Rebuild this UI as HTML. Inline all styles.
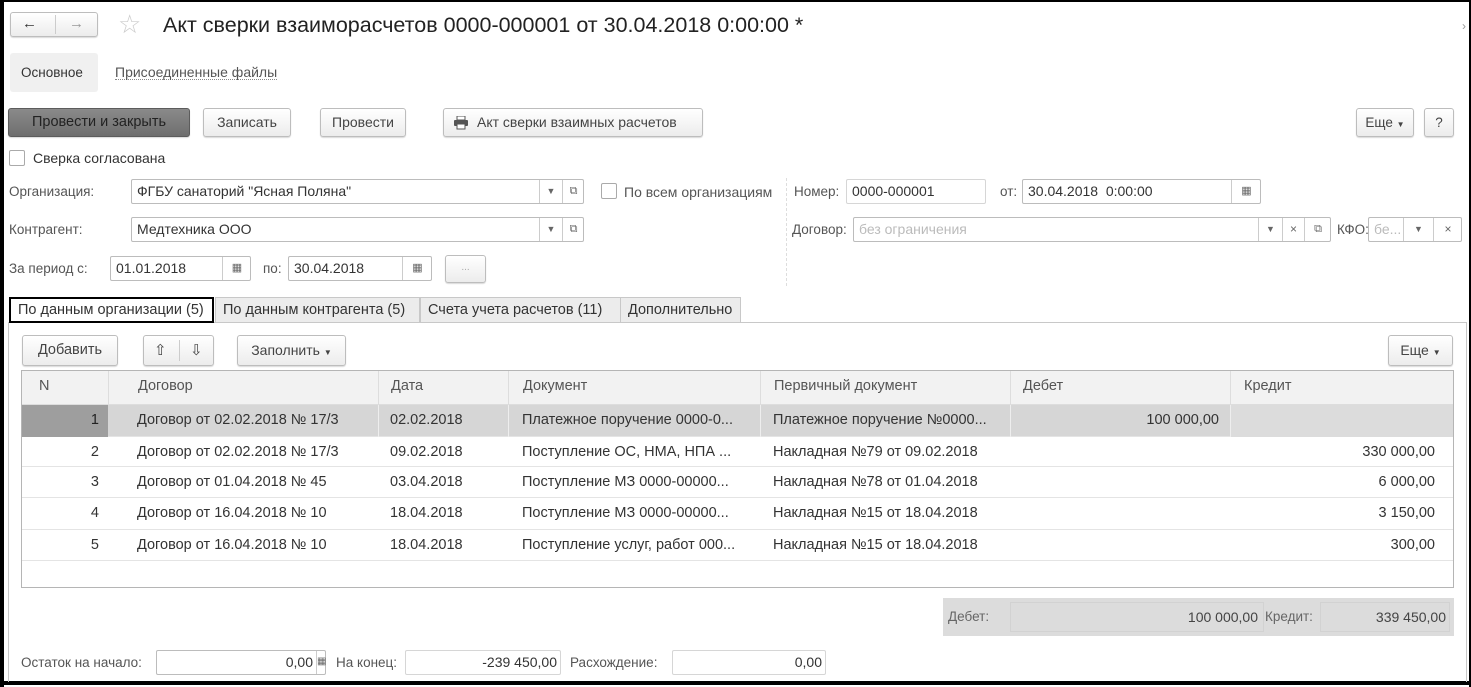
<!DOCTYPE html>
<html><head><meta charset="utf-8"><style>
*{box-sizing:border-box}
body{margin:0;width:1471px;height:687px;background:#fff;font-family:"Liberation Sans",Arial,sans-serif;font-size:13.5px;color:#333;position:relative;overflow:hidden}
.a{position:absolute}
.t{position:absolute;white-space:nowrap;line-height:16px}
.btn{position:absolute;border:1px solid #bdbdbd;border-radius:3px;background:linear-gradient(#fff,#ececec);box-shadow:0 1px 1px rgba(0,0,0,.15);text-align:center;color:#444;white-space:nowrap}
.inp{position:absolute;border:1px solid #bcbcbc;border-radius:2px;background:#fff;height:25px;line-height:23px;padding-left:5px;white-space:nowrap;color:#333;overflow:hidden;font-size:14px}
.sq{position:absolute;border-left:1px solid #ccc;top:0;bottom:0;text-align:center;font-size:9px;color:#666}
.cb{position:absolute;width:16px;height:16px;border:1px solid #aaa;border-radius:2px;background:#fff}
.lbl{color:#555}
.tab{position:absolute;top:297px;height:26px;background:#ececec;border:1px solid #c8c8c8;line-height:24px;padding:0 7px;color:#333;font-size:14.5px;white-space:nowrap}
.row{position:absolute;left:22px;width:1431px;border-bottom:1px solid #e4e4e4;font-size:14.5px}
.row div{position:absolute;top:0;white-space:nowrap}
</style></head><body>
<div class="a" style="left:0;top:0;width:1471px;height:2px;background:#000"></div>
<div class="a" style="left:0;top:0;width:4px;height:687px;background:#000"></div>
<div class="a" style="left:1469px;top:0;width:2px;height:687px;background:#000"></div>
<div class="a" style="left:0;top:681px;width:1471px;height:4px;background:#000"></div>

<div class="btn" style="left:10px;top:12px;width:88px;height:25px;line-height:22px;font-size:15px"><span style="position:absolute;left:11px;color:#333">&#8592;</span><span style="position:absolute;left:44px;top:2px;bottom:2px;border-left:1px solid #ccc"></span><span style="position:absolute;left:58px;color:#999">&#8594;</span></div>
<div class="t" style="left:118px;top:10px;font-size:26px;line-height:28px;color:#ccc">&#9734;</div>
<div class="t" style="left:163px;top:13px;font-size:21.5px;line-height:24px;color:#222">Акт сверки взаиморасчетов 0000-000001 от 30.04.2018 0:00:00 *</div>
<div class="t" style="left:1462px;top:18px;color:#999;font-size:12px">&#8250;</div>

<div class="a" style="left:10px;top:53px;width:88px;height:39px;background:#f0f0f0;border-radius:3px"></div>
<div class="t" style="left:21px;top:65px;color:#333">Основное</div>
<div class="t" style="left:115px;top:65px;color:#555;border-bottom:1px dotted #888;line-height:14px;font-size:14px">Присоединенные файлы</div>

<div class="btn" style="left:8px;top:108px;width:182px;height:29px;line-height:27px;background:linear-gradient(#8a8a8a,#6e6e6e);border-color:#5c5c5c;color:#222;font-size:14.5px">Провести и закрыть</div>
<div class="btn" style="left:203px;top:108px;width:88px;height:29px;line-height:27px;font-size:14px">Записать</div>
<div class="btn" style="left:320px;top:108px;width:86px;height:29px;line-height:27px;font-size:14px">Провести</div>
<div class="btn" style="left:443px;top:108px;width:260px;height:29px;line-height:27px;text-align:left;padding-left:33px;font-size:14px">
<svg class="a" style="left:9px;top:7px" width="16" height="14" viewBox="0 0 16 14"><rect x="4" y="0" width="8" height="4" fill="#fff" stroke="#555"/><rect x="1" y="4" width="14" height="6" rx="1" fill="#555"/><rect x="4" y="8" width="8" height="5" fill="#fff" stroke="#555"/></svg>Акт сверки взаимных расчетов</div>
<div class="btn" style="left:1356px;top:108px;width:58px;height:29px;line-height:27px">Еще <span style="font-size:8px">&#9660;</span></div>
<div class="btn" style="left:1424px;top:108px;width:30px;height:29px;line-height:27px">?</div>

<div class="cb" style="left:9px;top:150px"></div>
<div class="t" style="left:33px;top:150px;font-size:14px">Сверка согласована</div>

<div class="t lbl" style="left:9px;top:184px">Организация:</div>
<div class="inp" style="left:131px;top:179px;width:453px">ФГБУ санаторий "Ясная Поляна"<div class="sq" style="left:407px;width:23px">&#9660;</div><div class="sq" style="left:430px;width:22px;font-size:11px">&#10697;</div></div>
<div class="cb" style="left:601px;top:183px"></div>
<div class="t lbl" style="left:624px;top:184px;font-size:14px">По всем организациям</div>
<div class="a" style="left:786px;top:178px;height:108px;border-left:1px dashed #ddd"></div>
<div class="t lbl" style="left:794px;top:184px">Номер:</div>
<div class="inp" style="left:846px;top:179px;width:140px;border-color:#d6d6d6">0000-000001</div>
<div class="t lbl" style="left:1000px;top:184px">от:</div>
<div class="inp" style="left:1022px;top:179px;width:239px">30.04.2018 &nbsp;0:00:00<div class="sq" style="left:208px;width:30px;font-size:11px">&#9638;</div></div>

<div class="t lbl" style="left:9px;top:222px">Контрагент:</div>
<div class="inp" style="left:131px;top:217px;width:453px">Медтехника ООО<div class="sq" style="left:407px;width:23px">&#9660;</div><div class="sq" style="left:430px;width:22px;font-size:11px">&#10697;</div></div>
<div class="t lbl" style="left:792px;top:222px">Договор:</div>
<div class="inp" style="left:853px;top:217px;width:478px;color:#bbb">без ограничения<div class="sq" style="left:404px;width:24px;color:#666">&#9660;</div><div class="sq" style="left:428px;width:22px;font-size:12px;color:#666">&#215;</div><div class="sq" style="left:450px;width:27px;font-size:11px;color:#666">&#10697;</div></div>
<div class="t lbl" style="left:1337px;top:222px">КФО:</div>
<div class="inp" style="left:1368px;top:217px;width:94px;color:#bbb">бе...<div class="sq" style="left:34px;width:30px;color:#666">&#9660;</div><div class="sq" style="left:64px;width:29px;font-size:12px;color:#666">&#215;</div></div>

<div class="t lbl" style="left:9px;top:261px">За период с:</div>
<div class="inp" style="left:110px;top:256px;width:141px">01.01.2018<div class="sq" style="left:111px;width:29px;font-size:11px">&#9638;</div></div>
<div class="t lbl" style="left:263px;top:261px">по:</div>
<div class="inp" style="left:288px;top:256px;width:144px">30.04.2018<div class="sq" style="left:113px;width:30px;font-size:11px">&#9638;</div></div>
<div class="btn" style="left:445px;top:255px;width:41px;height:28px;line-height:24px;color:#aaa;font-size:10px">...</div>

<div class="a" style="left:8px;top:322px;width:1459px;height:360px;border:1px solid #c8c8c8;border-bottom:none"></div>
<div class="tab" style="left:9px;width:205px;background:#fff;border:2px solid #000;line-height:22px;z-index:2">По данным организации (5)</div>
<div class="tab" style="left:215px;width:205px">По данным контрагента (5)</div>
<div class="tab" style="left:420px;width:201px">Счета учета расчетов (11)</div>
<div class="tab" style="left:620px;width:121px">Дополнительно</div>

<div class="btn" style="left:22px;top:335px;width:96px;height:31px;line-height:29px;font-size:14.5px">Добавить</div>
<div class="btn" style="left:143px;top:335px;width:71px;height:31px;line-height:29px"><span style="position:absolute;left:10px;font-size:15px">&#8679;</span><span style="position:absolute;left:35px;top:4px;bottom:4px;border-left:1px solid #ccc"></span><span style="position:absolute;left:46px;font-size:15px">&#8681;</span></div>
<div class="btn" style="left:237px;top:335px;width:109px;height:31px;line-height:29px;font-size:14px">Заполнить <span style="font-size:8px">&#9660;</span></div>
<div class="btn" style="left:1388px;top:335px;width:65px;height:31px;line-height:29px;font-size:14px">Еще <span style="font-size:8px">&#9660;</span></div>

<div class="a" style="left:21px;top:370px;width:1433px;height:218px;border:1px solid #b5b5b5"></div>
<div class="row" style="top:371px;height:34px;background:#f2f2f2;border-bottom:1px solid #ddd;color:#555;line-height:31px">
<div style="left:17px">N</div>
<div style="left:86px;height:33px;border-left:1px solid #ddd;padding-left:29px">Договор</div>
<div style="left:356px;height:33px;border-left:1px solid #ddd;padding-left:12px">Дата</div>
<div style="left:486px;height:33px;border-left:1px solid #ddd;padding-left:14px">Документ</div>
<div style="left:738px;height:33px;border-left:1px solid #ddd;padding-left:13px">Первичный документ</div>
<div style="left:988px;height:33px;border-left:1px solid #ddd;padding-left:12px">Дебет</div>
<div style="left:1208px;height:33px;border-left:1px solid #ddd;padding-left:13px">Кредит</div>
</div>
<div class="row" style="top:405px;height:32px;background:#d6d6d6;line-height:31px;color:#333">
<div style="left:0;width:86px;height:32px;background:#9e9e9e;text-align:right;padding-right:9px;color:#222">1</div>
<div style="left:115px">Договор от 02.02.2018 № 17/3</div>
<div style="left:356px;width:1px;height:32px;background:#eee"></div>
<div style="left:368px">02.02.2018</div>
<div style="left:486px;width:1px;height:32px;background:#eee"></div>
<div style="left:500px">Платежное поручение 0000-0...</div>
<div style="left:738px;width:1px;height:32px;background:#eee"></div>
<div style="left:751px">Платежное поручение №0000...</div>
<div style="left:988px;width:1px;height:32px;background:#eee"></div>
<div style="left:988px;width:209px;text-align:right">100 000,00</div>
<div style="left:1208px;width:223px;height:32px;background:#dcdcdc;border-left:1px solid #eee"></div>
</div>
<div class="row" style="top:437px;height:30px;line-height:30px"><div style="left:0;width:77px;text-align:right">2</div><div style="left:115px">Договор от 02.02.2018 № 17/3</div><div style="left:368px">09.02.2018</div><div style="left:500px">Поступление ОС, НМА, НПА ...</div><div style="left:751px">Накладная №79 от 09.02.2018</div><div style="left:1208px;width:205px;text-align:right">330 000,00</div></div>
<div class="row" style="top:467px;height:31px;line-height:30px"><div style="left:0;width:77px;text-align:right">3</div><div style="left:115px">Договор от 01.04.2018 № 45</div><div style="left:368px">03.04.2018</div><div style="left:500px">Поступление МЗ 0000-00000...</div><div style="left:751px">Накладная №78 от 01.04.2018</div><div style="left:1208px;width:205px;text-align:right">6 000,00</div></div>
<div class="row" style="top:498px;height:32px;line-height:30px"><div style="left:0;width:77px;text-align:right">4</div><div style="left:115px">Договор от 16.04.2018 № 10</div><div style="left:368px">18.04.2018</div><div style="left:500px">Поступление МЗ 0000-00000...</div><div style="left:751px">Накладная №15 от 18.04.2018</div><div style="left:1208px;width:205px;text-align:right">3 150,00</div></div>
<div class="row" style="top:530px;height:31px;line-height:30px"><div style="left:0;width:77px;text-align:right">5</div><div style="left:115px">Договор от 16.04.2018 № 10</div><div style="left:368px">18.04.2018</div><div style="left:500px">Поступление услуг, работ 000...</div><div style="left:751px">Накладная №15 от 18.04.2018</div><div style="left:1208px;width:205px;text-align:right">300,00</div></div>

<div class="a" style="left:943px;top:598px;width:511px;height:38px;background:#dcdcdc"></div>
<div class="a" style="left:1010px;top:602px;width:254px;height:30px;border:1px solid #d2d2d2"></div>
<div class="a" style="left:1320px;top:602px;width:130px;height:30px;border:1px solid #d2d2d2"></div>
<div class="t lbl" style="left:948px;top:609px;color:#666">Дебет:</div>
<div class="t" style="left:1060px;top:609px;width:198px;text-align:right;color:#444;font-size:14px">100 000,00</div>
<div class="t lbl" style="left:1265px;top:609px;color:#666">Кредит:</div>
<div class="t" style="left:1300px;top:609px;width:146px;text-align:right;color:#444;font-size:14px">339 450,00</div>

<div class="t lbl" style="left:21px;top:655px">Остаток на начало:</div>
<div class="inp" style="left:156px;top:650px;width:170px;text-align:right;padding-right:12px">0,00</div>
<div class="a" style="left:316px;top:651px;height:23px;border-left:1px solid #ccc"></div>
<div class="t" style="left:317px;top:654px;font-size:10px;color:#666">&#9638;</div>
<div class="t lbl" style="left:336px;top:655px">На конец:</div>
<div class="inp" style="left:405px;top:650px;width:156px;text-align:right;padding-right:3px;border-color:#d6d6d6">-239 450,00</div>
<div class="t lbl" style="left:570px;top:655px">Расхождение:</div>
<div class="inp" style="left:672px;top:650px;width:154px;text-align:right;padding-right:3px;border-color:#d6d6d6">0,00</div>
</body></html>
